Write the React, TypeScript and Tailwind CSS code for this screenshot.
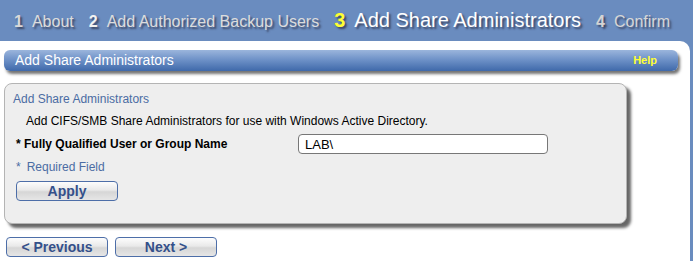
import React from "react";

const steps = [
  { num: "1", label: "About", numClass: "text-[#d9d9d9]", labelClass: "text-[#dcdcdc]", size: "text-[16px]" },
  { num: "2", label: "Add Authorized Backup Users", numClass: "text-[#f2f2f2]", labelClass: "text-[#dcdcdc]", size: "text-[16px]" },
  { num: "3", label: "Add Share Administrators", numClass: "text-[#ffff33]", labelClass: "text-white", size: "text-[20px]" },
  { num: "4", label: "Confirm", numClass: "text-[#d4d4d4]", labelClass: "text-[#d6d6d6]", size: "text-[16px]" },
];

const Btn = ({ children, className = "" }: { children: React.ReactNode; className?: string }) => (
  <button
    className={`h-[20px] w-[102px] rounded-[4px] border border-[#4d6ea8] bg-[linear-gradient(to_bottom,#fdfdfd_0%,#e9e9e9_45%,#d6d6d6_55%,#e6e6e6_100%)] text-[14px] font-bold leading-none text-[#34508a] ${className}`}
  >
    {children}
  </button>
);

export default function App() {
  return (
    <div className="h-[261px] w-[693px] overflow-hidden bg-[#6a8cbf] font-['Liberation_Sans',Arial,sans-serif]">
      {/* wizard steps */}
      <div className="flex h-[41px] items-baseline pl-[14px] pt-[5px]">
        {steps.map((s) => (
          <div key={s.num} className={`mr-[15px] flex items-baseline [text-shadow:2px_2px_2px_rgba(40,40,60,0.7)] ${s.size}`}>
            <span className={`mr-[9px] font-bold ${s.numClass}`}>{s.num}</span>
            <span className={s.labelClass}>{s.label}</span>
          </div>
        ))}
      </div>

      <div className="mr-[3px] h-[220px] rounded-tr-[10px] bg-white pt-[9px]">
        {/* section header bar */}
        <div className="ml-[4px] flex h-[21px] w-[674px] items-center justify-between rounded-[6px] bg-[linear-gradient(to_bottom,#9bb5dc_0%,#6f92c8_45%,#3f69aa_100%)] pl-[11px] pr-[21px] shadow-[2px_3px_3px_rgba(0,0,0,0.55)]">
          <span className="text-[14px] text-white">Add Share Administrators</span>
          <span className="text-[11px] font-bold text-[#ffff33]">Help</span>
        </div>

        {/* form panel */}
        <div className="ml-[4px] mt-[12px] h-[141px] w-[623px] rounded-[8px] border border-[#b4b4b4] bg-[#eeeeee] pl-[8px] pt-[7px] shadow-[4px_4px_3px_rgba(0,0,0,0.6)]">
          <div className="h-[16px] text-[12px] leading-[16px] text-[#4b6ca3]">Add Share Administrators</div>
          <div className="ml-[13px] mt-[6px] h-[16px] text-[12px] leading-[16px] text-black">
            Add CIFS/SMB Share Administrators for use with Windows Active Directory.
          </div>
          <div className="mt-[5px] flex h-[20px] items-center pl-[3px]">
            <span className="w-[282px] text-[12px] font-bold text-black">* Fully Qualified User or Group Name</span>
            <input
              defaultValue="LAB\"
              className="h-[20px] w-[250px] rounded-[4px] border border-[#777777] bg-white pl-[6px] text-[13px] text-black outline-none"
            />
          </div>
          <div className="mt-[5px] flex h-[16px] items-center pl-[3px] text-[12px] text-[#4b6ca3]">
            <span className="mr-[6px]">*</span>
            <span>Required Field</span>
          </div>
          <Btn className="ml-[3px] mt-[6px]">Apply</Btn>
        </div>

        {/* navigation */}
        <div className="ml-[6px] mt-[13px] flex gap-[7px]">
          <Btn>&lt; Previous</Btn>
          <Btn>Next &gt;</Btn>
        </div>
      </div>
    </div>
  );
}
